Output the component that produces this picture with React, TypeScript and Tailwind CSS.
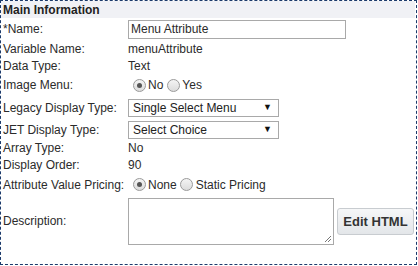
import React from 'react';

function Radio({ checked }: { checked?: boolean }) {
  return (
    <span className="relative inline-block w-[13px] h-[13px] rounded-full border border-[#9a9a9a] bg-gradient-to-b from-[#f4f4f4] to-[#dcdcdc] shrink-0">
      {checked && <span className="absolute left-[3px] top-[3px] w-[5px] h-[5px] rounded-full bg-[#555]" />}
    </span>
  );
}

function Select({ value }: { value: string }) {
  return (
    <div className="w-[151px] h-[18px] border border-[#a9a9a9] bg-white flex items-center pl-[4px] pr-[6px]">
      <span className="flex-1 text-[#222]">{value}</span>
      <span className="text-[9px] leading-none text-[#111]">▼</span>
    </div>
  );
}

function Row({ label, h, children }: { label: string; h: string; children?: React.ReactNode }) {
  return (
    <div className={`flex items-center ${h}`}>
      <div className="w-[125px] shrink-0">{label}</div>
      <div className="flex items-center">{children}</div>
    </div>
  );
}

export default function App() {
  return (
    <div className="w-[418px] h-[266px] bg-white" style={{ fontFamily: '"Liberation Sans", Arial, sans-serif' }}>
      <div className="w-[417px] h-[265px] border border-dashed border-[#1b3a6b] text-[12px] text-[#2b2b2b] leading-none">
        <div className="h-[17px] mr-[1px] bg-[#f0f1f5] font-bold text-[#222] flex items-center pl-[2px]">Main Information</div>
        <div className="pl-[2px]">
          <Row label="*Name:" h="h-[22px]">
            <div className="w-[218px] h-[19px] border border-[#a9a9a9] flex items-center pl-[2px]">Menu Attribute</div>
          </Row>
          <Row label="Variable Name:" h="h-[17px]">menuAttribute</Row>
          <Row label="Data Type:" h="h-[17px]">Text</Row>
          <Row label="Image Menu:" h="h-[22px]">
            <div className="flex items-center pl-[5px]">
              <Radio checked />
              <span className="ml-[2px] mr-[4px]">No</span>
              <Radio />
              <span className="ml-[2px]">Yes</span>
            </div>
          </Row>
          <Row label="Legacy Display Type:" h="h-[23px]">
            <Select value="Single Select Menu" />
          </Row>
          <Row label="JET Display Type:" h="h-[21px]">
            <Select value="Select Choice" />
          </Row>
          <Row label="Array Type:" h="h-[16px]">No</Row>
          <Row label="Display Order:" h="h-[17px]">90</Row>
          <Row label="Attribute Value Pricing:" h="h-[23px]">
            <div className="flex items-center pl-[5px]">
              <Radio checked />
              <span className="ml-[2px] mr-[3px]">None</span>
              <Radio />
              <span className="ml-[3px]">Static Pricing</span>
            </div>
          </Row>
          <Row label="Description:" h="h-[50px]">
            <div className="relative w-[206px] h-[47px] border border-[#a9a9a9] bg-white">
              <svg className="absolute right-[1px] bottom-[1px]" width="9" height="9" viewBox="0 0 9 9">
                <path d="M8 2 L2 8 M8 5 L5 8" stroke="#777" strokeWidth="1" />
              </svg>
            </div>
            <button className="ml-[3px] w-[77px] h-[27px] rounded-[3px] border border-[#c8ccd0] bg-gradient-to-b from-[#f6f7f8] to-[#e3e6e9] font-bold text-[13px] text-[#333]">
              Edit HTML
            </button>
          </Row>
        </div>
      </div>
    </div>
  );
}
